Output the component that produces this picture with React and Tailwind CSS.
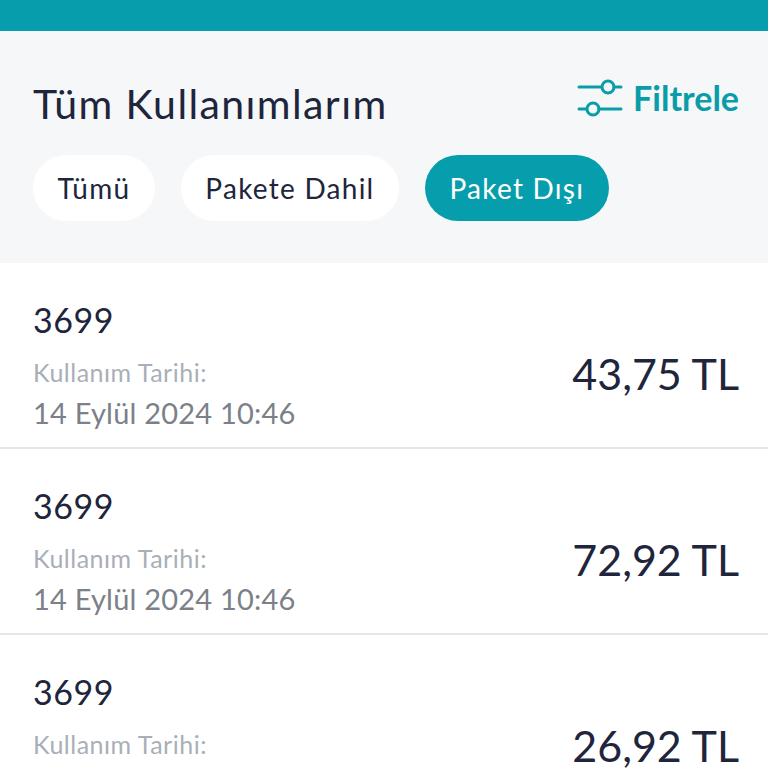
const usages = [
  { id: 1, code: '3699', amount: '43,75 TL', date: '14 Eylül 2024 10:46' },
  { id: 2, code: '3699', amount: '72,92 TL', date: '14 Eylül 2024 10:46' },
  { id: 3, code: '3699', amount: '26,92 TL', date: '14 Eylül 2024 10:46' },
];

function FilterIcon() {
  return (
    <svg width="46" height="38" viewBox="0 0 46 38" fill="none" stroke="#099daa" strokeWidth="3" strokeLinecap="round">
      <path d="M2 8H25" />
      <circle cx="31" cy="8" r="6" fill="#f6f7f9" />
      <path d="M37 8H44" />
      <path d="M2 30H10" />
      <circle cx="16" cy="30" r="6" fill="#f6f7f9" />
      <path d="M22 30H44" />
    </svg>
  );
}

function Chip({ label, active }) {
  return (
    <div
      className={`h-[66px] px-[24.5px] flex items-center rounded-[33px] text-[28px] tracking-[1.25px] ${active ? 'bg-[#069eac] text-white' : 'bg-white text-[#20253c]'}`}
    >
      {label}
    </div>
  );
}

function UsageRow({ code, amount, date }) {
  return (
    <div className="h-[186px] shrink-0 bg-white border-b-2 border-[#e4e6e8] pl-[33px] pr-[29px] flex items-center justify-between">
      <div className="flex flex-col self-start pt-[36px]">
        <span className="text-[34px] leading-[42px] tracking-[0.5px] text-[#20253c]">{code}</span>
        <span className="mt-[13px] text-[25px] leading-[36px] tracking-[0.5px] text-[#a9afb8]">Kullanım Tarihi:</span>
        <span className="mt-[4px] text-[29px] leading-[38px] tracking-[0.2px] text-[#7b8089]">{date}</span>
      </div>
      <span className="text-[43px] text-[#20253c] mt-[39px]">{amount}</span>
    </div>
  );
}

export default function App() {
  return (
    <div className="h-[768px] overflow-hidden bg-white flex flex-col font-['Lato','Noto_Sans',sans-serif]">
      <div className="h-[31px] shrink-0 bg-[#069eac]" />
      <div className="h-[232px] shrink-0 bg-[#f6f7f9] pl-[33px] pr-[29px] pt-[48px]">
        <div className="flex items-start justify-between">
          <h1 className="text-[41px] leading-[52px] tracking-[1.4px] text-[#20253c] mt-[-1px]">Tüm Kullanımlarım</h1>
          <div className="flex items-center gap-[10px] mt-[-1px]">
            <FilterIcon />
            <span className="text-[34px] leading-[40px] font-bold text-[#099daa]">Filtrele</span>
          </div>
        </div>
        <div className="flex gap-[26px] mt-[25px]">
          <Chip label="Tümü" />
          <Chip label="Pakete Dahil" />
          <Chip label="Paket Dışı" active />
        </div>
      </div>
      {usages.map((u) => (
        <UsageRow key={u.id} code={u.code} amount={u.amount} date={u.date} />
      ))}
    </div>
  );
}
